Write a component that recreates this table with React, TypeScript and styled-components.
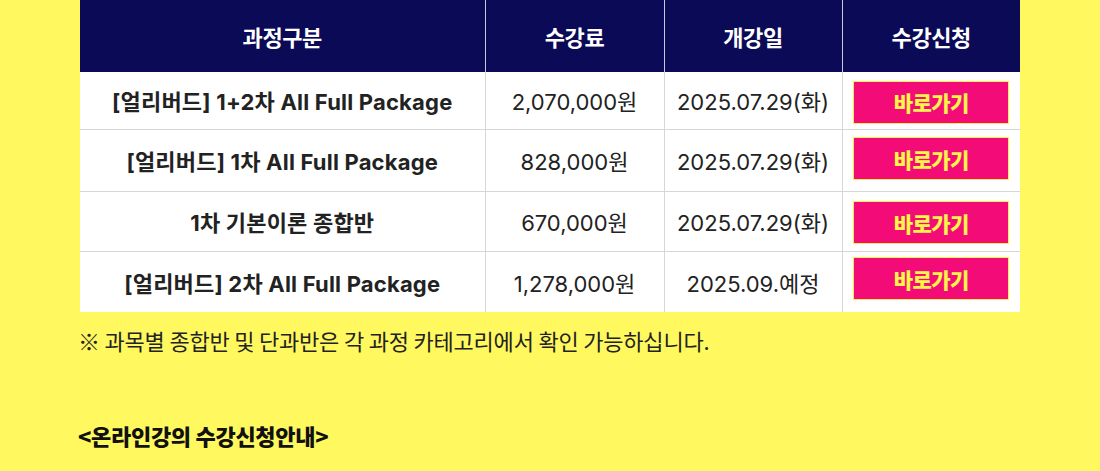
import styled, { createGlobalStyle } from "styled-components"

const GlobalStyle = createGlobalStyle`
  html, body {
    margin: 0;
    padding: 0;
    background: #fff95f;
  }
  body {
    font-family: "Noto Sans CJK KR", "Noto Sans", sans-serif;
    color: #222;
  }
`

const Page = styled.div`
  width: 1100px;
  height: 471px;
  background: #fff95f;
  display: flex;
  flex-direction: column;
  align-items: center;
  overflow: hidden;
`

const Section = styled.div`
  width: 944px;
  display: flex;
  flex-direction: column;
`

const Table = styled.table`
  width: 940px;
  margin: 0 auto;
  border-collapse: collapse;
  table-layout: fixed;
  background: #fff;
`

const HeadCell = styled.th`
  height: 72px;
  padding: 0;
  background: #0b0a57;
  color: #fff;
  font-size: 22px;
  font-weight: 700;
  letter-spacing: -0.4px;
  border-left: 1px solid #c9c9d9;
  &:first-child { border-left: none; }
`

const Row = styled.tr<{ $h: number }>`
  height: ${p => p.$h}px;
  border-top: 1px solid #d6d6d6;
  &:first-child { border-top: none; }
`

const Cell = styled.td<{ $bold?: boolean }>`
  padding: 0;
  text-align: center;
  font-family: "Inter", "Noto Sans CJK KR", sans-serif;
  font-size: 22px;
  font-weight: ${p => (p.$bold ? 700 : 400)};
  letter-spacing: ${p => (p.$bold ? "0.2px" : "0")};
  color: #222;
  border-left: 1px solid #d6d6d6;
  &:first-child { border-left: none; }
`

const GoButton = styled.button<{ $shift: number }>`
  display: block;
  margin: ${p => Math.max(0, p.$shift * 2)}px auto ${p => Math.max(0, -p.$shift * 2)}px;
  width: 156px;
  height: 43px;
  background: #f30c77;
  border: 1px solid #fff048;
  color: #fff54a;
  font-family: inherit;
  font-size: 21px;
  font-weight: 900;
  letter-spacing: -0.6px;
  cursor: pointer;
`

const Note = styled.p`
  margin: 12px 0 0;
  font-size: 22px;
  letter-spacing: -0.2px;
  color: #222;
`

const Title = styled.h3`
  margin: 63px 0 0;
  font-size: 22px;
  font-weight: 800;
  letter-spacing: -0.3px;
  color: #111;
`

const courses = [
  { name: "[얼리버드] 1+2차 All Full Package", price: "2,070,000원", date: "2025.07.29(화)", h: 57, shift: 2 },
  { name: "[얼리버드] 1차 All Full Package", price: "828,000원", date: "2025.07.29(화)", h: 62, shift: -1.5 },
  { name: "1차 기본이론 종합반", price: "670,000원", date: "2025.07.29(화)", h: 60, shift: 1.5 },
  { name: "[얼리버드] 2차 All Full Package", price: "1,278,000원", date: "2025.09.예정", h: 61, shift: -3 },
]

function App() {
  return (
    <>
      <GlobalStyle />
      <Page>
        <Section>
          <Table>
            <colgroup>
              <col style={{ width: 405 }} />
              <col style={{ width: 179 }} />
              <col style={{ width: 178 }} />
              <col style={{ width: 178 }} />
            </colgroup>
            <thead>
              <tr>
                <HeadCell>과정구분</HeadCell>
                <HeadCell>수강료</HeadCell>
                <HeadCell>개강일</HeadCell>
                <HeadCell>수강신청</HeadCell>
              </tr>
            </thead>
            <tbody>
              {courses.map(c => (
                <Row key={c.name} $h={c.h}>
                  <Cell $bold>{c.name}</Cell>
                  <Cell>{c.price}</Cell>
                  <Cell>{c.date}</Cell>
                  <Cell><GoButton $shift={c.shift}>바로가기</GoButton></Cell>
                </Row>
              ))}
            </tbody>
          </Table>
          <Note>※ 과목별 종합반 및 단과반은 각 과정 카테고리에서 확인 가능하십니다.</Note>
          <Title>&lt;온라인강의 수강신청안내&gt;</Title>
        </Section>
      </Page>
    </>
  )
}

export default App
